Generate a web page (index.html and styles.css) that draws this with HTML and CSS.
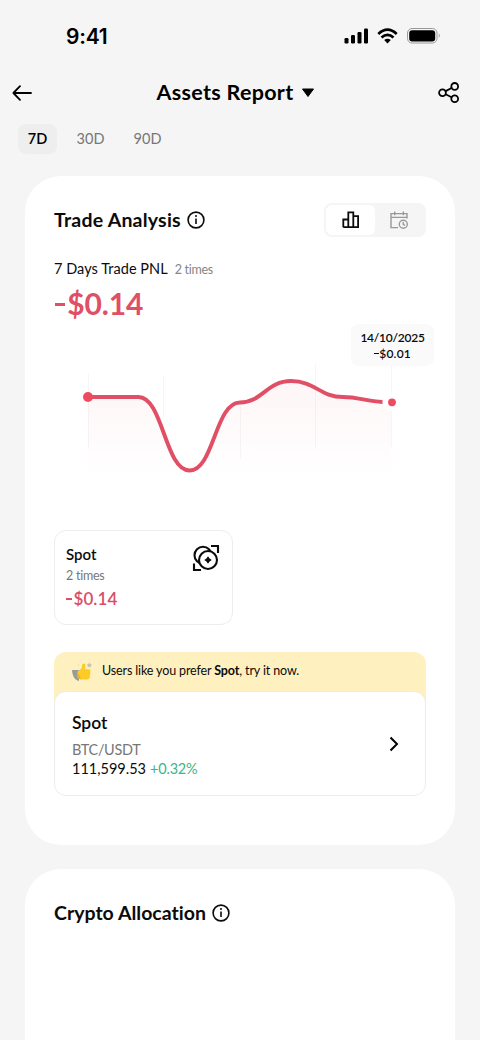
FILE: index.html
```html
<!DOCTYPE html>
<html lang="en">
<head>
<meta charset="utf-8">
<title>Assets Report</title>
<link rel="stylesheet" href="styles.css">
</head>
<body>
<div class="status">
  <span class="clock">9:41</span>
  <svg class="status-icons" width="98" height="18" viewBox="0 0 98 18">
    <rect x="0.5" y="11" width="4" height="5.5" rx="1.2"/><rect x="7" y="8" width="4" height="8.500" rx="1.200"/><rect x="13.500" y="5" width="4" height="11.500" rx="1.200"/><rect x="20" y="1.500" width="4" height="15" rx="1.200"/>
    <g fill="none" stroke="#000" stroke-width="2.700"><path d="M34.300 6.900Q43.500-1.500 52.700 6.900"/><path d="M37.500 10.500Q43.500 5.100 49.500 10.500"/></g>
    <path d="M40.200 13.100Q43.500 10.500 46.800 13.100L43.500 16.500Z"/>
    <rect x="63.500" y="1.500" width="29.500" height="14.500" rx="4.500" fill="none" stroke="#999"/>
    <rect x="65.200" y="3.200" width="26" height="11.200" rx="3"/><path d="M94.800 6.300q2 2.300 0 4.600z" fill="#999"/>
  </svg>
</div>
<header class="nav">
  <svg class="back" width="20" height="16" viewBox="0 0 20 16"><path d="M8 1.200 1.400 8 8 14.800M1.400 8H19"/></svg>
  <h1 class="nav-title"><span>Assets Report</span><svg width="14" height="10" viewBox="0 0 14 10"><path d="M1.500 1h11L7 8.500z" fill="#000" stroke="#000" stroke-linejoin="round"/></svg></h1>
  <svg class="share" width="22" height="22" viewBox="0 0 22 22"><circle cx="4.500" cy="10.700" r="3.400"/><circle cx="16.700" cy="4.400" r="3.400"/><circle cx="16.700" cy="16.700" r="3.400"/><path d="m7.600 9.100 6-3.100M7.600 12.300l6 2.900"/></svg>
</header>
<nav class="tabs"><span class="tab active">7D</span><span class="tab">30D</span><span class="tab">90D</span></nav>
<main>
<section class="card analysis">
  <div class="card-head">
    <h2 class="trade-title">Trade Analysis</h2>
    <svg class="info" width="18" height="18" viewBox="0 0 18 18"><circle cx="9" cy="9" r="7.900"/><path d="M9 7.500v5.600"/><circle class="dot" cx="9" cy="5.100" r="1"/></svg>
    <div class="toggle">
      <div class="toggle-on"><svg width="18" height="18" viewBox="0 0 18 18"><path d="M1.300 16.200V8.500h5M6.300 16.200V1.300h5v14.900M11.300 5.200h4.800v11H1.300"/></svg></div>
      <div class="toggle-off"><svg width="20" height="20" viewBox="0 0 20 20"><path d="M9 17.600H2V3.600h16v5M2 7.400h16M5.700 1.500v3.800M14.300 1.500v3.800"/><circle cx="14.300" cy="14.300" r="4"/><path d="M14.300 11.900v2.600l1.700.9"/></svg></div>
    </div>
  </div>
  <div class="pnl-row"><span class="pnl-label">7 Days Trade PNL</span><span class="pnl-count">2 times</span></div>
  <div class="pnl"><i class="minus"></i>$0.14</div>
  <div class="chart">
    <svg width="372" height="150" viewBox="54 340 372 150">
      <defs><linearGradient id="fade" x1="0" y1="380" x2="0" y2="478" gradientUnits="userSpaceOnUse"><stop stop-color="#ef4b60" stop-opacity=".055"/><stop offset="1" stop-color="#ef4b60" stop-opacity="0"/></linearGradient></defs>
      <path d="M88.500 373v75M163.500 376v42M240.500 405v54M315.500 364v84M391.500 362v85" stroke="#f8f5f6" fill="none"/>
      <path d="M88 397H138.500C163 397 165 470.500 189.500 470.500C214 470.500 215 402 240 402C262 402 267 381 291 381C315 381 320 397 343 397C359 397 367 401.500 391 402V475H88Z" fill="url(#fade)"/>
      <path d="M88 397H138.500C163 397 165 470.500 189.500 470.500C214 470.500 215 402.500 240 402.500C262 402.500 267 381 291 381C315 381 320 397 343 397C358 397 367 401.500 382.500 402" fill="none" stroke="#e04f65" stroke-width="3.900"/>
      <circle cx="88" cy="397" r="5" fill="#ef4b60"/><circle cx="392" cy="402.300" r="9" fill="#fff"/><circle cx="392" cy="402.300" r="3.900" fill="#ef4b60"/>
    </svg>
    <div class="tip"><span>14/10/2025</span><span class="tip-value"><i class="minus"></i>$0.01</span></div>
  </div>
  <div class="spot">
    <div><div class="spot-name">Spot</div><div class="spot-count">2 times</div><div class="spot-pnl"><i class="minus"></i>$0.14</div></div>
    <svg class="coins" width="28" height="28" viewBox="0 0 28 28"><path d="M19 2h7v7M2 19.500v6.500h7"/><circle cx="11" cy="11.300" r="8.500"/><circle cx="16" cy="16" r="9" fill="#fff"/><path class="gem" d="M16 12.800q1 2.200 3.200 3.200-2.200 1-3.200 3.200-1-2.200-3.200-3.200 2.200-1 3.200-3.200z"/></svg>
  </div>
  <div class="promo">
    <div class="promo-head">
      <svg width="22" height="20" viewBox="0 0 22 20"><path d="M1 8h7v11C4 18 1.500 15 1 8z" fill="#999a9c"/><path d="M6.500 9.500 10.500 6.500 11.300 2.500q.3-1.300 1.700-.9 1.600.5 1.500 2.200L14 7.200h4q1.700 0 1.500 1.800l-.8 6.500q-.3 1.900-2.200 1.900H10l-3.500-1.600z" fill="#fccb25"/><path d="M6.500 9.500v6.300l3.500 1.600" fill="#e6b41c"/><path d="m18.300.5.9 1.600 1.800.3-1.200 1.300.2 1.800-1.700-.8-1.700.8.300-1.800-1.300-1.300 1.800-.3z" fill="#c9c3ae"/><circle cx="7.500" cy="3" r=".6" fill="#d5c894"/></svg>
      <span>Users like you prefer <b>Spot</b>, try it now.</span>
    </div>
    <div class="promo-body">
      <div><div class="coin-name">Spot</div><div class="pair">BTC/USDT</div><div class="quote"><span class="price">111,599.53</span><span class="change">+0.32%</span></div></div>
      <svg class="chev" width="10" height="16" viewBox="0 0 10 16"><path d="m1.500 1.500 6.500 6.500-6.500 6.500"/></svg>
    </div>
  </div>
</section>
<section class="card allocation">
  <div class="card-head"><h2 class="crypto-title">Crypto Allocation</h2><svg class="info" width="18" height="18" viewBox="0 0 18 18"><circle cx="9" cy="9" r="7.900"/><path d="M9 7.500v5.600"/><circle class="dot" cx="9" cy="5.100" r="1"/></svg></div>
</section>
</main>
</body>
</html>
```
FILE: styles.css
```css
* { box-sizing: border-box; }
body { margin: 0; height: 1040px; overflow: hidden; background: #f5f5f5; color: #0b0b0b; font-family: Lato, "Liberation Sans", sans-serif; font-variant-ligatures: none; white-space: nowrap; }
h1, h2 { margin: 0; font-weight: 600; }
svg { flex: none; display: block; }
.status { height: 72px; display: flex; justify-content: space-between; align-items: center; padding: 0 40px 0 66px; }
.clock { font: 600 21px Inter, sans-serif; letter-spacing: -.2px; color: #000; }
.status-icons { margin-right: -2px; }
.nav { height: 42px; display: flex; align-items: center; justify-content: space-between; padding: 0 20px 0 12px; }
.back, .share { fill: none; stroke: #000; stroke-width: 1.800; stroke-linecap: round; stroke-linejoin: round; }
.nav-title { display: flex; align-items: center; gap: 8px; padding-left: 2px; font-size: 21.500px; font-weight: 700; letter-spacing: .3px; color: #000; }
.nav-title span { padding-bottom: 2px; }
.tabs { display: flex; padding: 10px 0 0 18px; height: 62px; }
.tab { width: 57px; height: 30px; line-height: 30px; text-align: center; font-size: 14.500px; color: #777; }
.tab.active { width: 39px; margin-right: 5px; border-radius: 8px; background: #eee; color: #000; font-weight: 600; }
.card { margin: 0 25px; background: #fff; border-radius: 36px; padding: 27px 29px 0; }
.analysis { height: 669px; }
.allocation { margin-top: 24px; height: 220px; }
.card-head { height: 34px; display: flex; align-items: center; gap: 6px; }
.card-head h2 { padding-bottom: 2px; font-size: 19.500px; font-weight: 700; }
.trade-title { letter-spacing: .22px; }
.crypto-title { letter-spacing: .01px; }
.info { fill: none; stroke: #0b0b0b; stroke-width: 1.600; }
.info .dot { fill: #0b0b0b; stroke: none; }
.toggle { margin-left: auto; width: 102px; height: 34px; border-radius: 8px; background: #f5f5f5; padding: 2px; display: flex; }
.toggle > div { width: 49px; height: 30px; display: flex; align-items: center; justify-content: center; }
.toggle-on { background: #fff; border-radius: 6px; }
.toggle svg { fill: none; stroke: #0b0b0b; stroke-width: 1.800; }
.toggle .toggle-off svg { margin-right: 2px; stroke: #999; stroke-width: 1.400; }
.pnl-row { margin-top: 20px; height: 22px; display: flex; align-items: center; gap: 7px; font-size: 14.500px; letter-spacing: .05px; }
.pnl-count { padding-top: 2px; color: #858585; font-size: 12.500px; letter-spacing: -.3px; }
.pnl { height: 45px; line-height: 48px; font-size: 30px; font-weight: 700; letter-spacing: -.1px; color: #e04f65; }
.minus { display: inline-block; width: .36em; height: .095em; margin: 0 .06em 0 .02em; background: currentColor; vertical-align: .31em; }
.chart { position: relative; height: 206px; padding-top: 16px; }
.tip { position: absolute; left: 297px; top: 0; width: 83px; height: 42px; border-radius: 8px; background: #fafafa; display: flex; flex-direction: column; align-items: center; padding-top: 6px; font-size: 12px; line-height: 15.500px; font-weight: 600; letter-spacing: -.25px; }
.tip-value { letter-spacing: .2px; }
.spot { width: 179px; height: 95px; border: 1px solid #ededed; border-radius: 12px; padding: 12px 12px 0 11px; display: flex; justify-content: space-between; }
.spot-name { font-size: 15px; line-height: 22px; font-weight: 600; }
.spot-count { margin-top: 1px; font-size: 12.500px; line-height: 20px; letter-spacing: -.25px; color: #777; }
.spot-pnl { font-size: 17px; line-height: 26px; font-weight: 600; letter-spacing: .1px; color: #d84f66; }
.coins { margin-top: 1px; fill: none; stroke: #0b0b0b; stroke-width: 2.100; }
.coins .gem { fill: #0b0b0b; stroke: #0b0b0b; stroke-width: .8; }
.promo { margin-top: 27px; background: linear-gradient(#fff0bf 55px, #fff 55px); border-radius: 12px; height: 144px; }
.promo-head { height: 39px; display: flex; align-items: center; gap: 9px; padding-left: 17px; font-size: 12.500px; letter-spacing: -.13px; }
.promo-head span { padding-bottom: 2px; }
.promo-body { height: 105px; border: 1px solid #ececec; border-radius: 12px; background: #fff; display: flex; align-items: center; justify-content: space-between; padding: 0 26px 0 17px; }
.coin-name { font-size: 17.500px; line-height: 27px; font-weight: 600; }
.pair { margin-top: 4px; font-size: 14.500px; line-height: 19px; letter-spacing: -.35px; color: #777; }
.quote { display: flex; gap: 4px; font-size: 14.500px; line-height: 19px; }
.change { color: #3eb489; letter-spacing: -.2px; }
.chev { fill: none; stroke: #000; stroke-width: 2; }
```
